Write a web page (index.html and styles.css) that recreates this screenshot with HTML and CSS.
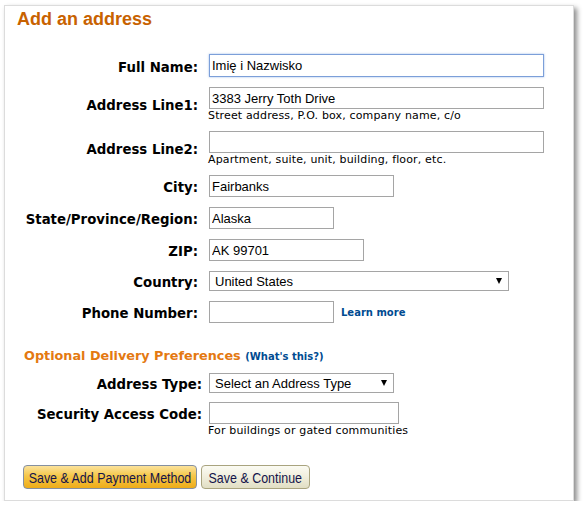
FILE: index.html
```html
<!DOCTYPE html>
<html lang="en">
<head>
  <meta charset="UTF-8" />
  <meta name="viewport" content="width=device-width, initial-scale=1.0"/>
  <title>Add an address</title>
  <link rel="stylesheet" href="styles.css">
</head>
<body>

  <div class="panel">
    <h1 class="title">Add an address</h1>

    <div class="form-grid">
      <label class="field-label">Full Name:</label>
      <div class="field">
        <input type="text" class="text-input w-wide is-focused" value="Imię i Nazwisko">
      </div>

      <label class="field-label">Address Line1:</label>
      <div class="field">
        <input type="text" class="text-input w-wide" value="3383 Jerry Toth Drive">
        <div class="hint">Street address, P.O. box, company name, c/o</div>
      </div>

      <label class="field-label">Address Line2:</label>
      <div class="field">
        <input type="text" class="text-input w-wide" value="">
        <div class="hint">Apartment, suite, unit, building, floor, etc.</div>
      </div>

      <label class="field-label">City:</label>
      <div class="field">
        <input type="text" class="text-input w-city" value="Fairbanks">
      </div>

      <label class="field-label">State/Province/Region:</label>
      <div class="field">
        <input type="text" class="text-input w-short" value="Alaska">
      </div>

      <label class="field-label">ZIP:</label>
      <div class="field">
        <input type="text" class="text-input w-zip" value="AK 99701">
      </div>

      <label class="field-label">Country:</label>
      <div class="field">
        <div class="select-wrap">
          <select class="select-input w-country">
            <option>United States</option>
          </select>
        </div>
      </div>

      <label class="field-label">Phone Number:</label>
      <div class="field field-inline">
        <input type="text" class="text-input w-short" value="">
        <a href="#" class="small-link">Learn more</a>
      </div>
    </div>

    <h2 class="section-title">Optional Delivery Preferences <a href="#" class="small-link">(What's this?)</a></h2>

    <div class="form-grid opt-grid">
      <label class="field-label">Address Type:</label>
      <div class="field">
        <div class="select-wrap">
          <select class="select-input w-city">
            <option>Select an Address Type</option>
          </select>
        </div>
      </div>

      <label class="field-label label-top">Security Access Code:</label>
      <div class="field">
        <input type="text" class="text-input w-code" value="">
        <div class="hint">For buildings or gated communities</div>
      </div>
    </div>

    <div class="actions">
      <button class="btn btn-primary"><span class="btn-text">Save &amp; Add Payment Method</span></button>
      <button class="btn btn-secondary"><span class="btn-text">Save &amp; Continue</span></button>
    </div>
  </div>

</body>
</html>
```

FILE: styles.css
```css
* {
  box-sizing: border-box;
}

body {
  margin: 0;
  background: #fff;
  color: #000;
  font-family: "DejaVu Sans", Verdana, sans-serif;
}

.panel {
  width: 570px;
  margin: 5px 0 0 4px;
  padding: 2px 0 11px 0;
  background: #fff;
  border: 1px solid #dcdcdc;
  box-shadow: 3px 3px 5px rgba(0, 0, 0, 0.45);
}

.title {
  margin: 0;
  padding-left: 12px;
  font-family: "Liberation Sans", Arial, sans-serif;
  font-size: 18px;
  line-height: 22px;
  font-weight: bold;
  color: #c86200;
}

.form-grid {
  display: grid;
  grid-template-columns: 193px 1fr;
  column-gap: 11px;
  row-gap: 10px;
  align-items: center;
  margin-top: 24px;
}

.field-label {
  padding-top: 4px;
  text-align: right;
  font-size: 13.3px;
  font-weight: bold;
  line-height: 16px;
}

.field {
  display: flex;
  flex-direction: column;
  align-items: flex-start;
}

.field-inline {
  flex-direction: row;
  align-items: center;
  gap: 7px;
}

.text-input {
  height: 22px;
  margin: 0;
  padding: 0 2px;
  border: 1px solid #a5a5a5;
  border-radius: 0;
  font-family: "Liberation Sans", Arial, sans-serif;
  font-size: 13px;
  color: #000;
  outline: none;
}

.text-input.is-focused {
  height: 23px;
  border-color: #7c9fd9;
  box-shadow: 0 0 2px rgba(90, 140, 220, 0.6);
}

.w-wide { width: 335px; }
.w-city { width: 185px; }
.w-short { width: 125px; }
.w-zip { width: 155px; }
.w-country { width: 300px; }
.w-code { width: 190px; }

.select-wrap {
  position: relative;
  display: inline-block;
}

.select-input {
  display: block;
  height: 20px;
  margin: 0;
  padding: 0 20px 0 5px;
  border: 1px solid #a5a5a5;
  border-radius: 0;
  background: #fff;
  font-family: "Liberation Sans", Arial, sans-serif;
  font-size: 13px;
  color: #000;
  -webkit-appearance: none;
  appearance: none;
  outline: none;
}

/* little black arrow, like the old windows select */
.select-wrap::after {
  content: "";
  position: absolute;
  right: 7px;
  top: 7px;
  border-left: 3px solid transparent;
  border-right: 3px solid transparent;
  border-top: 6px solid #000;
  pointer-events: none;
}

.hint {
  margin: 2px 0 0 -1px;
  font-size: 11px;
  line-height: 10px;
  letter-spacing: 0.15px;
  white-space: nowrap;
  color: #000;
}

.small-link {
  font-size: 10px;
  font-weight: bold;
  color: #004b91;
  text-decoration: none;
}

.section-title {
  margin: 25px 0 0 0;
  padding-left: 19px;
  font-size: 12.8px;
  line-height: 16px;
  font-weight: bold;
  color: #e47911;
}

.opt-grid {
  grid-template-columns: 197px 1fr;
  column-gap: 7px;
  row-gap: 9px;
  margin-top: 8px;
}

.opt-grid .field-label.label-top {
  align-self: start;
  padding-top: 2px;
  line-height: 22px;
}

.actions {
  display: flex;
  gap: 4px;
  margin-top: 29px;
  padding-left: 18px;
}

.btn {
  display: flex;
  align-items: center;
  justify-content: center;
  height: 24px;
  padding: 0;
  border-radius: 4px;
  font-family: "Liberation Sans", Arial, sans-serif;
  font-size: 15px;
  white-space: nowrap;
  color: #14144a;
  cursor: pointer;
}

/* the original buttons use a narrow face, squeeze the text to match */
.btn-text {
  display: inline-block;
  transform: scaleX(0.83);
}

.btn-primary {
  width: 174px;
  border: 1px solid #8590a0;
  background: linear-gradient(to bottom, #fbe29c 0%, #f5c748 45%, #eeac18 100%);
}

.btn-secondary {
  width: 109px;
  border: 1px solid #a9a47f;
  background: linear-gradient(to bottom, #fbfbf3 0%, #f0eedc 50%, #e1dec4 100%);
}
```
